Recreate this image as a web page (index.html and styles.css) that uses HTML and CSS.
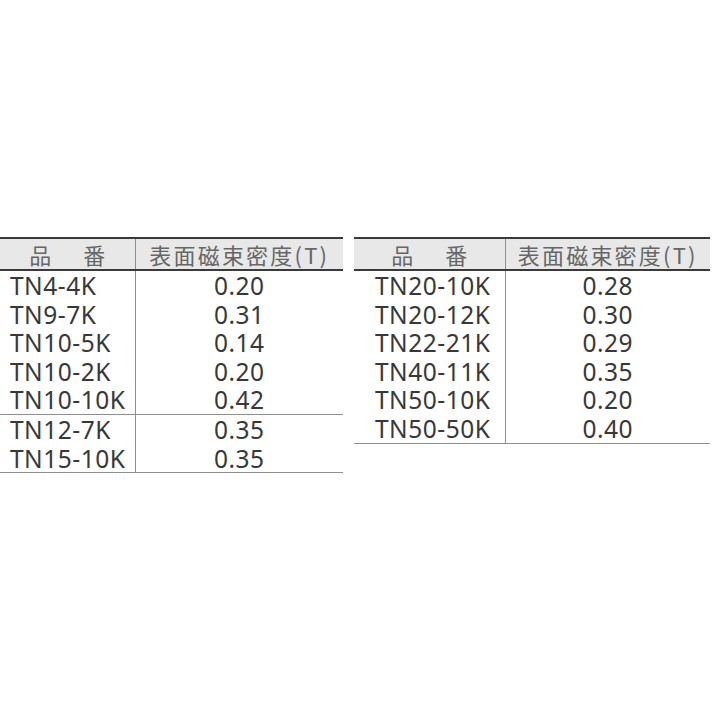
FILE: index.html
```html
<!DOCTYPE html>
<html lang="ja">
<head>
<meta charset="utf-8">
<title>表面磁束密度</title>
<link rel="stylesheet" href="styles.css">
</head>
<body>
<div class="sheet">
  <table class="spec spec-left">
    <colgroup><col class="c-name"><col class="c-val"></colgroup>
    <thead>
      <tr><th class="h-name">品　番</th><th class="h-val">表面磁束密度(T)</th></tr>
    </thead>
    <tbody>
      <tr><td class="name">TN4-4K</td><td class="val">0.20</td></tr>
      <tr><td class="name">TN9-7K</td><td class="val">0.31</td></tr>
      <tr><td class="name">TN10-5K</td><td class="val">0.14</td></tr>
      <tr><td class="name">TN10-2K</td><td class="val">0.20</td></tr>
      <tr class="group-end"><td class="name">TN10-10K</td><td class="val">0.42</td></tr>
      <tr><td class="name">TN12-7K</td><td class="val">0.35</td></tr>
      <tr><td class="name">TN15-10K</td><td class="val">0.35</td></tr>
    </tbody>
  </table>
  <table class="spec spec-right">
    <colgroup><col class="c-name"><col class="c-val"></colgroup>
    <thead>
      <tr><th class="h-name">品　番</th><th class="h-val">表面磁束密度(T)</th></tr>
    </thead>
    <tbody>
      <tr><td class="name">TN20-10K</td><td class="val">0.28</td></tr>
      <tr><td class="name">TN20-12K</td><td class="val">0.30</td></tr>
      <tr><td class="name">TN22-21K</td><td class="val">0.29</td></tr>
      <tr><td class="name">TN40-11K</td><td class="val">0.35</td></tr>
      <tr><td class="name">TN50-10K</td><td class="val">0.20</td></tr>
      <tr><td class="name">TN50-50K</td><td class="val">0.40</td></tr>
    </tbody>
  </table>
</div>
</body>
</html>
```
FILE: styles.css
```css
html, body {
  margin: 0;
  padding: 0;
  background: #ffffff;
}
body {
  font-family: "Noto Sans", "Noto Sans CJK JP", sans-serif;
  color: #383838;
}
.sheet {
  display: flex;
  align-items: flex-start;
  gap: 11px;
  padding-top: 237px;
}
.spec {
  border-collapse: collapse;
  table-layout: fixed;
  border-top: 2px solid #3a3a3a;
  border-bottom: 1.5px solid #8e8e8e;
}
.spec-left { width: 343px; }
.spec-left .c-name { width: 135px; }
.spec-right { width: 356px; }
.spec-right .c-name { width: 151px; }

.spec th {
  height: 30px;
  padding: 0;
  background: #e8e8e8;
  border-bottom: 2px solid #3a3a3a;
  font-family: "Noto Sans CJK JP", sans-serif;
  font-weight: normal;
  font-size: 22px;
  line-height: 30px;
  color: #666666;
  text-align: center;
  white-space: nowrap;
}
.spec .h-name { letter-spacing: 5px; padding-left: 5px; }
.spec .h-val { letter-spacing: 2.2px; border-left: 1.5px solid #8e8e8e; }

.spec td {
  height: 27.1px;
  padding: 1.5px 0 0;
  font-size: 24.5px;
  line-height: 26px;
  letter-spacing: 0.5px;
  white-space: nowrap;
}
.spec .name { text-align: left; padding-left: 10px; }
.spec-right .name { padding-left: 21px; }
.spec .val { text-align: center; border-left: 1.5px solid #8e8e8e; }
.spec .group-end td { border-bottom: 1.5px solid #8e8e8e; }
```
